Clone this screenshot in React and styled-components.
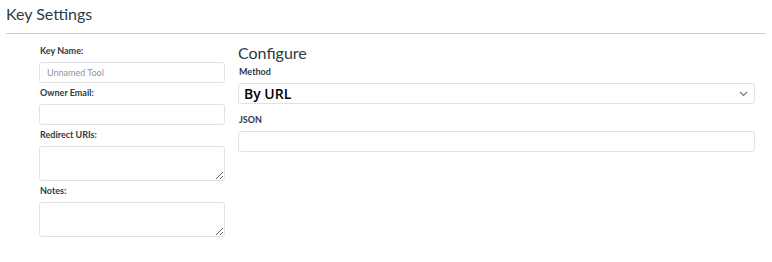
import React from "react";
import styled, { createGlobalStyle } from "styled-components";

const GlobalStyle = createGlobalStyle`
  body {
    margin: 0;
    background: #fff;
    font-family: Lato, "Liberation Sans", sans-serif;
    color: #2d3b45;
  }
`;

const Page = styled.div`
  width: 772px;
  height: 262px;
  padding: 0 6px;
  box-sizing: border-box;
`;

const Title = styled.h1`
  margin: 0;
  padding: 4px 0 0;
  height: 34px;
  box-sizing: border-box;
  font-size: 16px;
  font-weight: 400;
  color: #2d3b45;
  border-bottom: 1px solid #c7cdd1;
`;

const Body = styled.div`
  display: flex;
  gap: 13px;
  padding: 9px 11px 0 33px;
`;

const Left = styled.div`
  width: 186px;
  display: flex;
  flex-direction: column;
`;

const Right = styled.div`
  flex: 1;
  display: flex;
  flex-direction: column;
`;

const Label = styled.label`
  display: block;
  font-size: 9px;
  font-weight: 700;
  color: #2d3b45;
  margin: ${(p) => p.$top || 0}px 0 5px 1px;
  line-height: 12px;
`;

const Input = styled.input`
  height: 21px;
  box-sizing: border-box;
  border: 1px solid #e0e3e5;
  border-radius: 3px;
  padding: 0 7px;
  font-family: inherit;
  font-size: 9px;
  color: #2d3b45;
  outline: none;
  &::placeholder {
    color: #8b969e;
  }
`;

const Area = styled.textarea`
  height: 35px;
  box-sizing: border-box;
  border: 1px solid #e0e3e5;
  border-radius: 3px;
  font-family: inherit;
  outline: none;
`;

const Heading = styled.h2`
  margin: 0;
  font-size: 16px;
  font-weight: 400;
  line-height: 20px;
  color: #2d3b45;
`;

const SelectBox = styled.div`
  height: 21px;
  box-sizing: border-box;
  border: 1px solid #e0e3e5;
  border-radius: 3px;
  display: flex;
  align-items: center;
  justify-content: space-between;
  padding: 0 6px 0 5px;
  font-family: "Open Sans", "Liberation Sans", sans-serif;
  font-weight: 600;
  font-size: 14px;
  color: #000;
`;

const Chevron = () => (
  <svg width="9" height="6" viewBox="0 0 9 6" fill="none">
    <path d="M1 1l3.5 3.5L8 1" stroke="#6b7780" strokeWidth="1.1" />
  </svg>
);

export default function App() {
  return (
    <Page>
      <GlobalStyle />
      <Title>Key Settings</Title>
      <Body>
        <Left>
          <Label $top={2}>Key Name:</Label>
          <Input placeholder="Unnamed Tool" />
          <Label $top={4}>Owner Email:</Label>
          <Input />
          <Label $top={4}>Redirect URIs:</Label>
          <Area />
          <Label $top={4}>Notes:</Label>
          <Area />
        </Left>
        <Right>
          <Heading>Configure</Heading>
          <Label $top={3}>Method</Label>
          <SelectBox>
            <span>By URL</span>
            <Chevron />
          </SelectBox>
          <Label $top={10}>JSON</Label>
          <Input />
        </Right>
      </Body>
    </Page>
  );
}
